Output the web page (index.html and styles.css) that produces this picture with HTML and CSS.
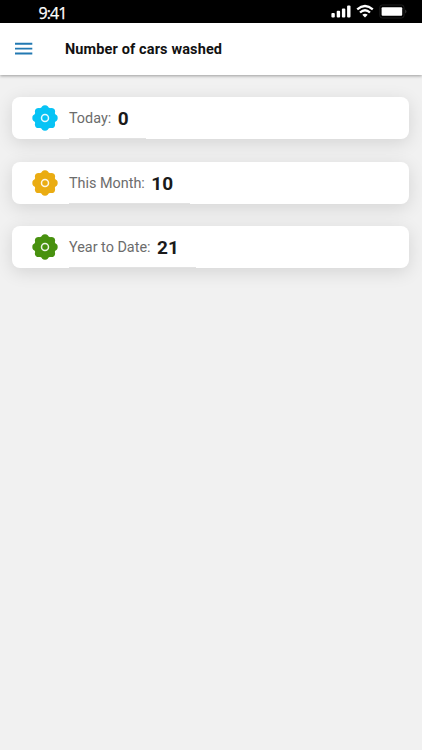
FILE: index.html
```html
<!DOCTYPE html>
<html lang="en">
<head>
<meta charset="utf-8">
<title>Number of cars washed</title>
<link rel="stylesheet" href="styles.css">
</head>
<body>
<svg class="defs" width="0" height="0" aria-hidden="true">
  <symbol id="flower" viewBox="-13 -13 26 26">
    <g fill="currentColor">
      <circle r="10.9"/>
      <circle cy="-9" r="3.7"/><circle cy="9" r="3.7"/>
      <circle cx="-9" r="3.7"/><circle cx="9" r="3.7"/>
      <circle cx="6.4" cy="6.4" r="3.7"/><circle cx="-6.4" cy="6.4" r="3.7"/>
      <circle cx="6.4" cy="-6.4" r="3.7"/><circle cx="-6.4" cy="-6.4" r="3.7"/>
    </g>
    <circle r="3.5" fill="none" stroke="#fff" stroke-opacity=".9" stroke-width="1.5"/>
  </symbol>
</svg>
<div class="status">
  <span class="time">9:41</span>
  <svg class="signals" width="78" height="16" viewBox="330 4 78 16">
    <g fill="#fff">
      <rect x="331.4" y="13" width="3.4" height="4.6" rx="1"/>
      <rect x="336.7" y="10.8" width="3.4" height="6.8" rx="1"/>
      <rect x="341.9" y="8.4" width="3.4" height="9.2" rx="1"/>
      <rect x="347.1" y="5.4" width="3.4" height="12.2" rx="1"/>
      <path d="M362.3 14.8Q365 12.6 367.7 14.8L365 17.4Z"/>
      <rect x="381.6" y="7.2" width="20.6" height="8.6" rx="1"/>
    </g>
    <g fill="none" stroke="#fff" stroke-width="2.3">
      <path d="M357.2 9.3Q365 2.7 372.8 9.3"/>
      <path d="M360 12.5Q365 8.1 370 12.5"/>
    </g>
    <rect x="379.8" y="5" width="24.2" height="13" rx="2.4" fill="none" stroke="#272727" stroke-width=".8"/>
    <path d="M405.4 9.5q2 2 0 4z" fill="#4a4a4a"/>
  </svg>
</div>
<header class="bar">
  <svg class="menu" width="18" height="14" viewBox="0 0 18 14"><path d="M0 1.7H17.3M0 6.6H17.3M0 11.5H17.3" stroke="#2279b2" stroke-width="1.9"/></svg>
  <h1>Number of cars washed</h1>
</header>
<main class="list">
  <section class="card">
    <svg class="flower blue"><use href="#flower"/></svg>
    <div class="stat"><span class="label">Today:</span><b>0</b></div>
  </section>
  <section class="card">
    <svg class="flower gold"><use href="#flower"/></svg>
    <div class="stat month"><span class="label">This Month:</span><b>10</b></div>
  </section>
  <section class="card">
    <svg class="flower green"><use href="#flower"/></svg>
    <div class="stat year"><span class="label">Year to Date:</span><b>21</b></div>
  </section>
</main>
</body>
</html>
```
FILE: styles.css
```css
* { box-sizing: border-box; }
body {
  margin: 0;
  height: 750px;
  overflow: hidden;
  background: #f1f1f1;
  font-family: Roboto, sans-serif;
}
.defs { display: none; }
.status {
  height: 23px;
  padding: 0 14px 0 38.5px;
  background: #000;
  display: flex;
  justify-content: space-between;
}
.time {
  padding-top: 4px;
  color: #fff;
  font: 16px/19px "Open Sans", sans-serif;
  letter-spacing: -.9px;
  -webkit-text-stroke: .25px #fff;
}
.signals { margin-top: 4px; }
.bar {
  height: 52px;
  padding-left: 15px;
  background: #fff;
  display: flex;
  align-items: center;
  box-shadow: 0 1px 3px rgba(0, 0, 0, .36);
}
.menu { margin-right: 32px; }
h1 {
  margin: 0;
  padding-top: 1px;
  color: #111;
  font-size: 14.5px;
  line-height: 20px;
  font-weight: 700;
  letter-spacing: .13px;
}
.list {
  padding: 22.4px 13px 0 12.4px;
  display: grid;
  gap: 22.5px;
}
.card {
  height: 42px;
  padding-left: 19.3px;
  border-radius: 8px;
  background: #fff;
  box-shadow: 0 4px 18px rgba(0, 0, 0, .12);
  display: flex;
  align-items: center;
}
.flower { width: 26px; height: 26px; margin-right: 11.3px; }
.blue { color: #07c3f5; }
.gold { color: #eaac12; }
.green { color: #48910f; }
.stat {
  width: 77px;
  height: 100%;
  padding-top: 1.6px;
  border-bottom: 1px solid #e2e2e2;
  display: flex;
  align-items: center;
  gap: 6.5px;
  white-space: nowrap;
}
.month { width: 121px; }
.year { width: 127px; }
.label { color: #6c6c6c; font-size: 14.4px; }
b { color: #1a1a1a; font-size: 19px; font-weight: 700; }
```
